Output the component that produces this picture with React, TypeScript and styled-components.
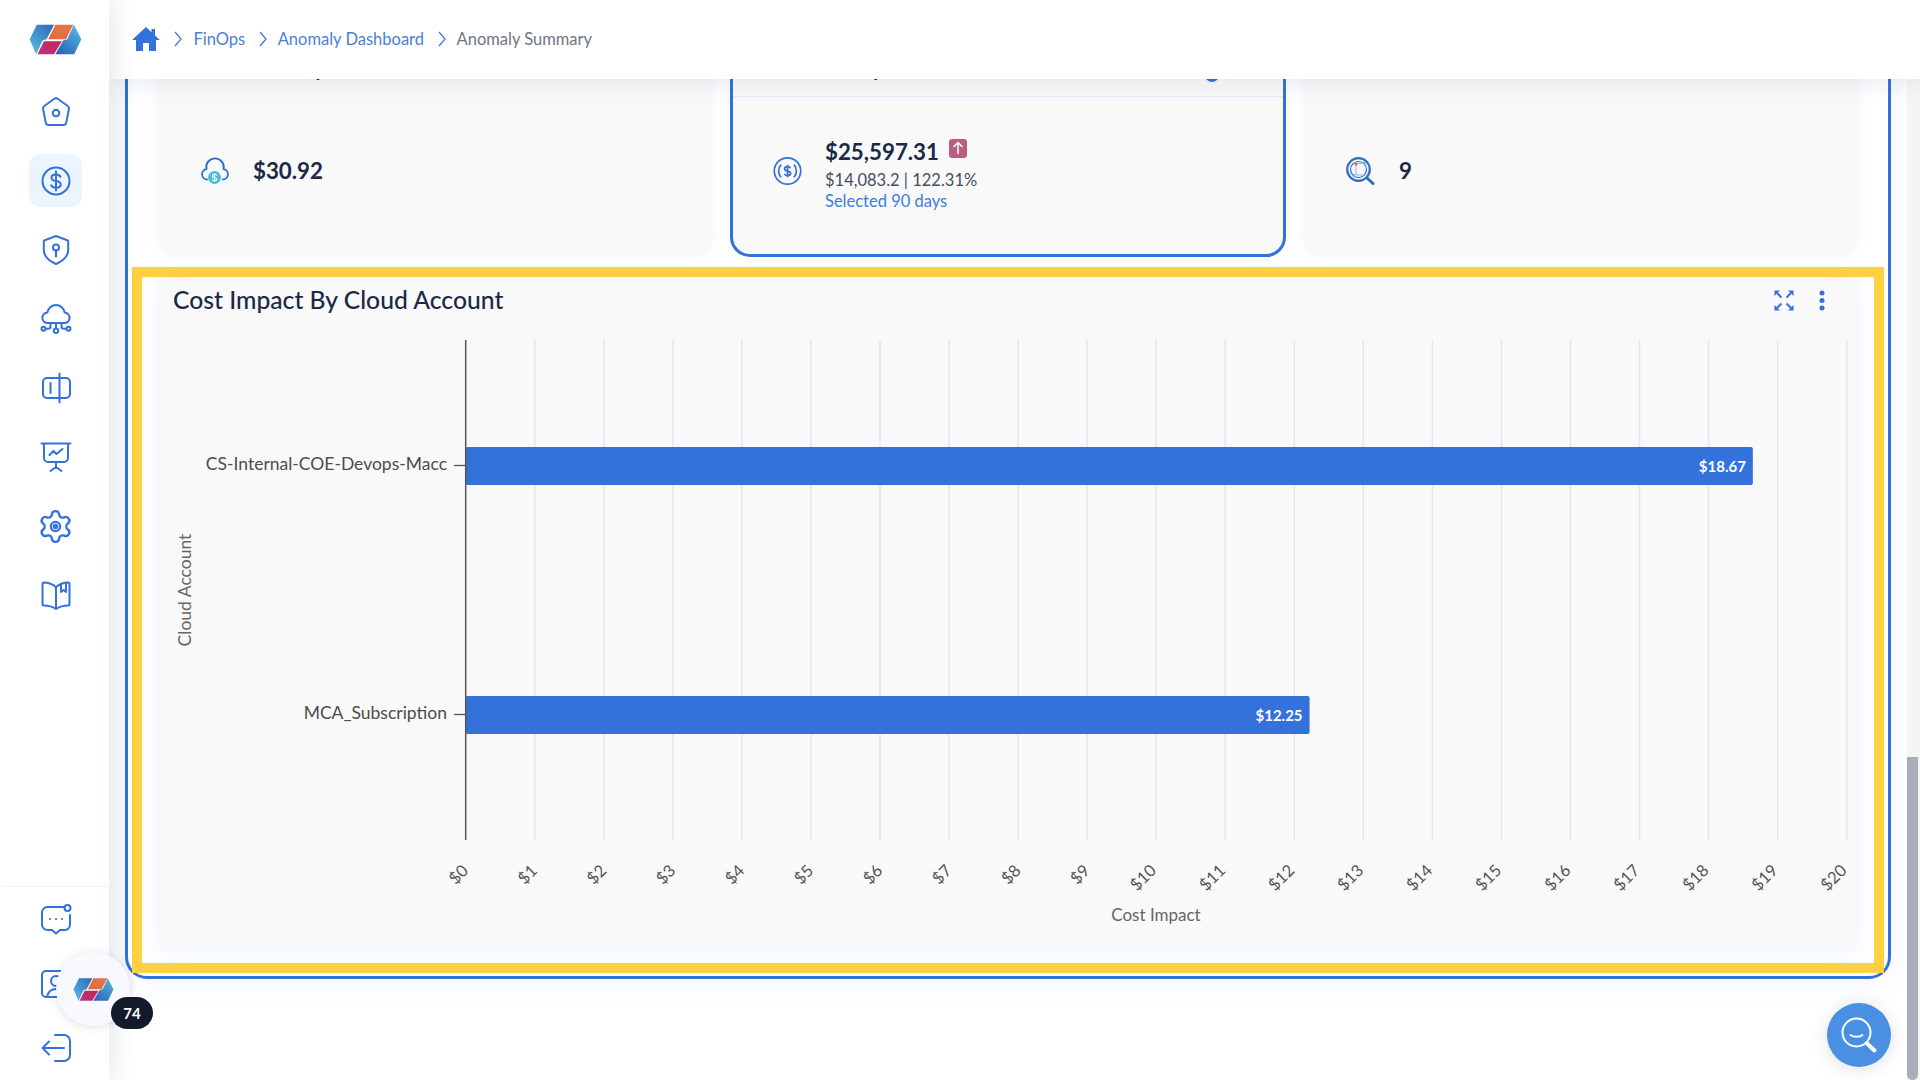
import React from 'react';
import styled, { createGlobalStyle } from 'styled-components';
import { Settings } from 'lucide-react';

const BLUE = '#3471db';
const FONT = '"Lato", "Noto Sans", sans-serif';

const GlobalStyle = createGlobalStyle`
  html, body {
    margin: 0;
    padding: 0;
    background: #fff;
    font-family: ${FONT};
  }
  * {
    box-sizing: border-box;
  }
`;

const Page = styled.div`
  position: relative;
  display: flex;
  width: 1920px;
  height: 1080px;
  overflow: hidden;
  background: #fff;
`;

const Sidebar = styled.aside`
  position: relative;
  z-index: 3;
  display: flex;
  flex-direction: column;
  flex: 0 0 109px;
  background: #fff;
  box-shadow: 6px 0 22px rgba(30, 45, 80, 0.1);
`;

const LogoWrap = styled.div`
  padding: 24px 0 0 29px;
  margin-bottom: 30px;
  line-height: 0;
`;

const NavList = styled.nav`
  display: flex;
  flex-direction: column;
  gap: 16px;
`;

const BottomList = styled.nav`
  display: flex;
  flex-direction: column;
  gap: 11px;
  margin-top: auto;
  margin-left: 2px;
  padding: 6px 0 6px;
  border-top: 1px solid #f2f3f5;
`;

const NavItem = styled.a<{ $active?: boolean; $bottom?: boolean }>`
  display: flex;
  align-items: center;
  justify-content: center;
  width: 53px;
  height: 53px;
  margin-left: ${(p) => (p.$bottom ? '27px' : '29px')};
  border-radius: 12px;
  background: ${(p) => (p.$active ? '#ebf4ff' : 'transparent')};
  color: ${BLUE};
`;

const GearIcon = styled(Settings)`
  margin-top: 2px;
`;

const Column = styled.div`
  display: flex;
  flex-direction: column;
  flex: 1;
  min-width: 0;
`;

const Topbar = styled.header`
  position: relative;
  z-index: 2;
  display: flex;
  align-items: center;
  flex: 0 0 79px;
  padding: 0 0 2px 23px;
  background: #fff;
  box-shadow: 0 3px 26px rgba(30, 45, 80, 0.1);
`;

const Crumbs = styled.div`
  display: flex;
  align-items: center;
  font-size: 16.5px;
`;

const Crumb = styled.span<{ $current?: boolean }>`
  color: ${(p) => (p.$current ? '#6f7684' : '#4a80d8')};
`;

const Sep = styled.svg`
  width: 10px;
  height: 16px;
  margin: 0 10px 0 12.5px;
  fill: none;
  stroke: #4a80d8;
  stroke-width: 1.4;
`;

const HomeSep = styled(Sep)`
  margin-left: 13px;
  margin-right: 10.5px;
`;

const Body = styled.div`
  display: flex;
  flex: 1;
  min-height: 0;
`;

const Content = styled.main`
  flex: 1;
  min-width: 0;
  overflow: hidden;
`;

const Panel = styled.section`
  margin: -60px 16px 0;
  padding: 8px 4px 3px;
  border: 3px solid ${BLUE};
  border-radius: 22px;
  background: #fff;
  box-shadow: 0 0 34px rgba(52, 113, 219, 0.08);
`;

const CardRow = styled.div`
  display: grid;
  grid-template-columns: repeat(3, 556px);
  gap: 17px;
  margin: 0 25px 10px;
`;

const Card = styled.article<{ $active?: boolean }>`
  height: 227px;
  border: 3px solid ${(p) => (p.$active ? BLUE : 'transparent')};
  border-radius: 20px;
  background: #f9f9f9;
  box-shadow: 0 0 14px rgba(52, 113, 219, 0.05);
`;

const CardHead = styled.div<{ $indent: number; $line?: boolean }>`
  display: flex;
  align-items: flex-end;
  height: 64px;
  padding: 0 0 16px ${(p) => p.$indent}px;
  border-bottom: 1px solid ${(p) => (p.$line ? '#e3ecfb' : 'transparent')};
  color: #1c2848;
  font-size: 20px;
  font-weight: 700;
`;

const HeadDot = styled.span`
  width: 14px;
  height: 14px;
  margin-left: auto;
  margin-right: 64px;
  margin-bottom: -2px;
  border-radius: 50%;
  background: ${BLUE};
`;

const CardBody = styled.div`
  display: flex;
  align-items: center;
  gap: 23px;
  height: 157px;
  padding: 0 0 9px 40px;
`;

const Stat = styled.div`
  display: flex;
  flex-direction: column;
  padding-top: 7px;
`;

const Amount = styled.div`
  display: flex;
  align-items: flex-start;
  gap: 12px;
  color: #1c2848;
  font-size: 22.3px;
  font-weight: 700;
  line-height: 28px;
`;

const UpBadge = styled.span`
  display: flex;
  align-items: center;
  justify-content: center;
  width: 18px;
  height: 19px;
  margin-top: 1px;
  margin-left: -2px;
  border-radius: 3px;
  background: #b8607f;
`;

const Delta = styled.div`
  margin-top: 4px;
  color: #454d60;
  font-size: 16.5px;
  line-height: 21px;
`;

const Period = styled.div`
  color: #3b7de0;
  font-size: 16.5px;
  line-height: 21px;
`;

const Highlight = styled.div`
  padding: 0 15px 15px;
  border: 10px solid #ffd040;
  background: #fdfeff;
`;

const ChartCard = styled.article`
  height: 671px;
  border-radius: 16px;
  background: #f9f9f9;
  box-shadow: 0 4px 16px rgba(52, 113, 219, 0.07);
`;

const ChartHead = styled.div`
  display: flex;
  align-items: center;
  justify-content: space-between;
  height: 46px;
  padding: 0 34px 2px 16px;
`;

const ChartTitle = styled.h2`
  margin: 0;
  color: #1c2848;
  font-size: 24.7px;
  font-weight: 500;
`;

const Tools = styled.div`
  display: flex;
  align-items: center;
  gap: 25px;
  margin-top: 2px;
  color: ${BLUE};
`;

const ChartSvg = styled.svg`
  display: block;
  width: 1702px;
  height: 625px;
  font-family: ${FONT};
`;

const ScrollTrack = styled.div`
  flex: 0 0 13px;
  padding: 678px 2px 0 0;
  background: #f5f5f5;
`;

const ScrollThumb = styled.div`
  height: 100%;
  margin-bottom: 2px;
  border-radius: 0 0 6px 6px;
  background: #a8adb8;
`;

const FloatLogo = styled.div`
  position: absolute;
  left: 56px;
  top: 952px;
  z-index: 4;
  display: flex;
  align-items: center;
  justify-content: center;
  width: 74px;
  height: 74px;
  border-radius: 50%;
  background: #f7f9fc;
  box-shadow: 0 1px 10px rgba(30, 45, 80, 0.15);
`;

const CountBadge = styled.span`
  position: absolute;
  left: 55px;
  top: 45px;
  display: flex;
  align-items: center;
  justify-content: center;
  width: 42px;
  height: 32px;
  border-radius: 16px;
  background: #121a2b;
  color: #fff;
  font-size: 15px;
  font-weight: 700;
`;

const SearchFab = styled.button`
  position: absolute;
  left: 1827px;
  top: 1003px;
  z-index: 4;
  display: flex;
  align-items: center;
  justify-content: center;
  width: 64px;
  height: 64px;
  padding: 0;
  border: 0;
  border-radius: 50%;
  background: #4a90e2;
  box-shadow: 0 2px 18px rgba(30, 45, 80, 0.14);
`;

const Line = styled.svg.attrs({ width: 34, height: 34, viewBox: '0 0 34 34' })`
  fill: none;
  stroke: currentColor;
  stroke-width: 2;
  stroke-linecap: round;
  stroke-linejoin: round;
`;

function Logo({ width, height, id }: { width: number; height: number; id: string }) {
  return (
    <svg width={width} height={height} viewBox="26 26 163 94">
      <defs>
        <linearGradient id={`${id}-l`} x1="1" y1="0" x2="0.2" y2="1">
          <stop offset="0" stopColor="#2c66b8" />
          <stop offset="1" stopColor="#56b8e4" />
        </linearGradient>
        <linearGradient id={`${id}-r`} x1="0.9" y1="0" x2="0.2" y2="1">
          <stop offset="0" stopColor="#56b8e4" />
          <stop offset="1" stopColor="#2c66b8" />
        </linearGradient>
        <linearGradient id={`${id}-o`} x1="0" y1="1" x2="1" y2="0">
          <stop offset="0" stopColor="#e8693c" />
          <stop offset="1" stopColor="#e0784e" />
        </linearGradient>
        <linearGradient id={`${id}-m`} x1="0" y1="1" x2="1" y2="0">
          <stop offset="0" stopColor="#b8357f" />
          <stop offset="1" stopColor="#c6225a" />
        </linearGradient>
      </defs>
      <polygon fill={`url(#${id}-l)`} points="50,28 103,28 80,72 68,75 48,118 28,72" />
      <polygon fill={`url(#${id}-o)`} points="107,28 162,28 140,72 85,72" />
      <polygon fill={`url(#${id}-m)`} points="72,78 127,78 103,118 52,118" />
      <polygon fill={`url(#${id}-r)`} points="164,28 187,72 165,118 107,118 131,76 144,72" />
    </svg>
  );
}

const Chevron = () => <path d="M2 1l6 7-6 7" />;

const dollarS =
  'M21.5 12.8c-.7-1.5-2.4-2.3-4.5-2.3-2.6 0-4.5 1.3-4.5 3.3s1.7 2.8 4.5 3.2 4.7 1.3 4.7 3.4-2 3.4-4.7 3.4c-2.2 0-4-.9-4.8-2.5M17 7.5v19';

const navTop = [
  <Line key="home">
    <path d="M15.3 3.7a3 3 0 0 1 3.4 0l10 7.3a3 3 0 0 1 1.2 3.2l-2.6 13.2a3 3 0 0 1-3 2.6H9.7a3 3 0 0 1-3-2.6L4.1 14.2a3 3 0 0 1 1.2-3.2z" />
    <circle cx="17" cy="18" r="3.3" />
  </Line>,
  <Line key="cost">
    <circle cx="17" cy="17" r="13.5" />
    <path d={dollarS} />
  </Line>,
  <Line key="shield">
    <path d="M17 3l11.2 4.2a1.5 1.5 0 0 1 1 1.4V17c0 7-5.5 11-12.2 14C10.3 28 4.8 24 4.8 17V8.6a1.5 1.5 0 0 1 1-1.4z" />
    <circle cx="17" cy="14.5" r="3" />
    <path d="M17 17.5v6" />
  </Line>,
  <Line key="network">
    <path d="M8.8 21a5.200 5.200 0 0 1-.5-10.400a8.800 8.800 0 0 1 17.400 0a5.200 5.200 0 0 1-.5 10.400z" />
    <path d="M17 21v5M11.500 21v3.200a2.500 2.500 0 0 1-2.500 2.500H6.500M22.500 21v3.200a2.500 2.500 0 0 0 2.500 2.500h2.500" />
    <circle cx="4.5" cy="26.700" r="2" />
    <circle cx="17" cy="28.700" r="2.200" />
    <circle cx="29.5" cy="26.700" r="2" />
  </Line>,
  <Line key="switch">
    <path d="M20.5 2.5v29M20.5 7H8a4 4 0 0 0-4 4v12a4 4 0 0 0 4 4h12.5M20.5 7H27a4 4 0 0 1 4 4v12a4 4 0 0 1-4 4h-6.5M11.5 12v10" />
  </Line>,
  <Line key="present">
    <path d="M2.5 3.5h29M5 3.5V18a4 4 0 0 0 4 4h16a4 4 0 0 0 4-4V3.5M10.5 15l4-4 3 3 6-5M17 22v5M11.5 31l5.5-4 5.5 4" />
  </Line>,
  <GearIcon key="gear" size={37} strokeWidth={1.5}>
    <circle cx="12" cy="12" r="1" fill="currentColor" />
  </GearIcon>,
  <Line key="book">
    <path d="M17 9C13.5 6 9 4.6 5 4.5a1.5 1.5 0 0 0-1.5 1.5v20a1.5 1.5 0 0 0 1.5 1.5c4.500 0 8.500 1.200 12 3.500 3.500-2.300 7.500-3.500 12-3.500a1.500 1.500 0 0 0 1.500-1.500V6A1.500 1.500 0 0 0 29 4.500c-4 .1-8.500 1.500-12 4.500zM17 9v22M22 6v8l2.500-2 2.500 2V5" />
  </Line>,
];

const navBottom = [
  <Line key="chat">
    <path d="M26 4H8.500A5.500 5.500 0 0 0 3 9.500v12A5.500 5.500 0 0 0 8.500 27H13l4 3.500L21 27h5a5.500 5.500 0 0 0 5-5.500V12" />
    <circle cx="28.500" cy="5" r="3" />
    <path d="M11 16h.1M17 16h.1M23 16h.1" />
  </Line>,
  <Line key="user">
    <path d="M9 30H7a4 4 0 0 1-4-4V8a4 4 0 0 1 4-4h20a4 4 0 0 1 4 4v18a4 4 0 0 1-4 4H9z" />
    <circle cx="17" cy="14" r="5" />
    <path d="M8 30c1-5 4-8 9-8s8 3 9 8" />
  </Line>,
  <Line key="logout">
    <path d="M16 4h9a6 6 0 0 1 6 6v14a6 6 0 0 1-6 6h-9M25 17H4M10 10.500L3.500 17l6.500 6.500" />
  </Line>,
];

function CloudCostIcon() {
  return (
    <svg width="30" height="28" viewBox="0 0 30 28">
      <path
        d="M7 22.500A5.300 5.300 0 0 1 6.400 12A8.800 8.800 0 1 1 23.600 12A5.300 5.300 0 0 1 23 22.500"
        fill="none"
        stroke="#2f6cc4"
        strokeWidth="1.800"
        strokeLinecap="round"
      />
      <circle cx="14.500" cy="20.500" r="6.500" fill="#49bcdc" />
      <path d="M16.800 18.500c-.5-.9-1.300-1.200-2.300-1.200-1.300 0-2.200.6-2.200 1.600 0 2.200 4.600 1 4.600 3.300 0 1-1 1.600-2.400 1.600-1.100 0-2-.4-2.400-1.200M14.500 16.200v8.600" fill="none" stroke="#fff" strokeWidth="1.100" />
    </svg>
  );
}

function CoinIcon() {
  return (
    <svg width="29" height="30" viewBox="0 0 34 34" fill="none" stroke={BLUE} strokeWidth="2">
      <circle cx="17" cy="17" r="15.500" />
      <path d="M9.500 9.500a11 11 0 0 0 0 15M24.500 9.500a11 11 0 0 1 0 15" />
      <path d={dollarS} strokeWidth="2.600" transform="translate(3.800 3.800) scale(.78)" />
    </svg>
  );
}

function InspectIcon() {
  return (
    <svg width="30" height="28" viewBox="0 0 30 28" fill="none">
      <circle cx="12.500" cy="12.500" r="11.300" stroke="#2f6cc4" strokeWidth="2.200" />
      <circle cx="12.500" cy="12.500" r="8" stroke="#2f6cc4" strokeWidth="1.200" />
      <path d="M10 7v11h9M10 7l8.500-1" stroke="#8bb8e8" strokeWidth="1" />
      <circle cx="10" cy="7" r="1.700" fill="#e8714e" />
      <circle cx="18.500" cy="6" r="1.400" fill="#62b4e6" />
      <circle cx="8" cy="18.500" r="1.400" fill="#62b4e6" />
      <path d="M21 21l6 5.500" stroke="#2f6cc4" strokeWidth="3" strokeLinecap="round" />
    </svg>
  );
}

function ExpandIcon() {
  return (
    <svg width="20" height="21" viewBox="0 0 20 21" fill="none" stroke="currentColor" strokeWidth="2">
      <path d="M0.500 0.500h5.500L0.500 6z" fill="currentColor" stroke="none" />
      <path d="M19.500 0.500h-5.500L19.500 6z" fill="currentColor" stroke="none" />
      <path d="M0.500 20.500h5.500L0.500 15z" fill="currentColor" stroke="none" />
      <path d="M19.500 20.500h-5.500L19.500 15z" fill="currentColor" stroke="none" />
      <path d="M3 3l4.500 4.500M17 3l-4.500 4.500M3 18l4.500-4.500M17 18l-4.500-4.500" />
    </svg>
  );
}

function DotsIcon() {
  return (
    <svg width="6" height="21" viewBox="0 0 6 21" fill="currentColor">
      <circle cx="3" cy="3" r="2.500" />
      <circle cx="3" cy="10.500" r="2.500" />
      <circle cx="3" cy="18" r="2.500" />
    </svg>
  );
}

const AXIS_X = 465.7;
const STEP = 69.05;
const ticks = Array.from({ length: 21 }, (_, i) => i);
const bars = [
  { name: 'CS-Internal-COE-Devops-Macc', value: 18.67, y: 447 },
  { name: 'MCA_Subscription', value: 12.25, y: 696 },
];

function CostChart() {
  return (
    <ChartSvg viewBox="157 323 1702 625">
      <defs>
        <clipPath id="tick-short">
          <rect x="157" y="323" width="1702" height="561" />
        </clipPath>
        <clipPath id="tick-long">
          <rect x="157" y="323" width="1702" height="568" />
        </clipPath>
      </defs>
      {ticks.slice(1).map((t) => (
        <line key={t} x1={AXIS_X + t * STEP} x2={AXIS_X + t * STEP} y1="340" y2="840" stroke="#e6e6e6" strokeWidth="1.500" />
      ))}
      {bars.map((b) => (
        <g key={b.name}>
          <rect x={AXIS_X} y={b.y} width={b.value * STEP - 2} height="38" rx="2" fill={BLUE} />
          <text x={AXIS_X + b.value * STEP - 9} y={b.y + 24.500} textAnchor="end" fill="#fff" fontSize="15" fontWeight="700">
            ${b.value.toFixed(2)}
          </text>
          <line x1="454" x2={AXIS_X} y1={b.y + 18.500} y2={b.y + 18.500} stroke="#555" strokeWidth="1.300" />
          <text x="447" y={b.y + 23} textAnchor="end" fill="#4c4c4c" fontSize="17.500">
            {b.name}
          </text>
        </g>
      ))}
      <line x1={AXIS_X} x2={AXIS_X} y1="340" y2="840" stroke="#555" strokeWidth="1.500" />
      {ticks.map((t) => {
        const wide = t >= 10;
        const cx = AXIS_X + t * STEP - (wide ? 12.500 : 6.700);
        const cy = wide ? 878 : 875;
        return (
          <g key={t} clipPath={`url(#${wide ? 'tick-long' : 'tick-short'})`}>
            <text x={cx} y={cy + 5} textAnchor="middle" fill="#555" fontSize="16.500" transform={`rotate(-45 ${cx} ${cy})`}>
              ${t}
            </text>
          </g>
        );
      })}
      <text x="191" y="590" textAnchor="middle" fill="#666" fontSize="17.500" transform="rotate(-90 191 590)">
        Cloud Account
      </text>
      <text x="1156" y="921" textAnchor="middle" fill="#666" fontSize="17">
        Cost Impact
      </text>
    </ChartSvg>
  );
}

export default function App() {
  return (
    <Page>
      <GlobalStyle />
      <Sidebar>
        <LogoWrap>
          <Logo width={53} height={31} id="main-logo" />
        </LogoWrap>
        <NavList>
          {navTop.map((icon, i) => (
            <NavItem key={i} $active={i === 1}>
              {icon}
            </NavItem>
          ))}
        </NavList>
        <BottomList>
          {navBottom.map((icon, i) => (
            <NavItem key={i} $bottom>
              {icon}
            </NavItem>
          ))}
        </BottomList>
      </Sidebar>

      <Column>
        <Topbar>
          <svg width="28" height="24" viewBox="0 0 28 24" fill={BLUE}>
            <path d="M14 0L0 13h4v11h7v-8h6v8h7V13h4l-5-4.600V2h-3.500v3.200z" />
          </svg>
          <Crumbs>
            <HomeSep viewBox="0 0 10 16"><Chevron /></HomeSep>
            <Crumb>FinOps</Crumb>
            <Sep viewBox="0 0 10 16"><Chevron /></Sep>
            <Crumb>Anomaly Dashboard</Crumb>
            <Sep viewBox="0 0 10 16"><Chevron /></Sep>
            <Crumb $current>Anomaly Summary</Crumb>
          </Crumbs>
        </Topbar>

        <Body>
          <Content>
            <Panel>
              <CardRow>
                <Card>
                  <CardHead $indent={39}>Total Cost Impact</CardHead>
                  <CardBody>
                    <CloudCostIcon />
                    <Amount>$30.92</Amount>
                  </CardBody>
                </Card>
                <Card $active>
                  <CardHead $indent={72} $line>
                    Cost Impact
                    <HeadDot />
                  </CardHead>
                  <CardBody>
                    <CoinIcon />
                    <Stat>
                      <Amount>
                        $25,597.31
                        <UpBadge>
                          <svg width="12" height="14" viewBox="0 0 12 14" fill="none" stroke="#fff" strokeWidth="1.500">
                            <path d="M6 13V1.500M1.500 6L6 1.500 10.500 6" />
                          </svg>
                        </UpBadge>
                      </Amount>
                      <Delta>$14,083.2 | 122.31%</Delta>
                      <Period>Selected 90 days</Period>
                    </Stat>
                  </CardBody>
                </Card>
                <Card>
                  <CardHead $indent={60}>Anomalies</CardHead>
                  <CardBody>
                    <InspectIcon />
                    <Amount>9</Amount>
                  </CardBody>
                </Card>
              </CardRow>

              <Highlight>
                <ChartCard>
                  <ChartHead>
                    <ChartTitle>Cost Impact By Cloud Account</ChartTitle>
                    <Tools>
                      <ExpandIcon />
                      <DotsIcon />
                    </Tools>
                  </ChartHead>
                  <CostChart />
                </ChartCard>
              </Highlight>
            </Panel>
          </Content>
          <ScrollTrack>
            <ScrollThumb />
          </ScrollTrack>
        </Body>
      </Column>

      <FloatLogo>
        <Logo width={41} height={25} id="float-logo" />
        <CountBadge>74</CountBadge>
      </FloatLogo>
      <SearchFab aria-label="Search">
        <svg width="40" height="40" viewBox="0 0 40 40" fill="none" stroke="#fff" strokeWidth="2" strokeLinecap="round">
          <circle cx="17.500" cy="17.500" r="14" />
          <path d="M11.500 20c3 2.300 9 2.300 12 0" />
          <path d="M27.500 28l8 7.500" strokeWidth="4" />
        </svg>
      </SearchFab>
    </Page>
  );
}
